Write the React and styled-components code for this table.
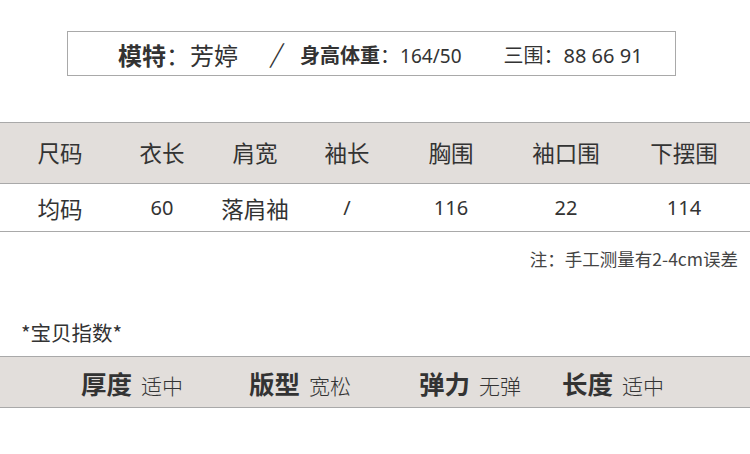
import React from "react";
import styled, { createGlobalStyle } from "styled-components";

const Global = createGlobalStyle`
  html, body { margin: 0; padding: 0; background: #fff; }
  body { font-family: "Noto Sans CJK SC", "Noto Sans", sans-serif; color: #333; }
`;

const Page = styled.div`
  width: 750px;
  height: 454px;
  overflow: hidden;
  padding-top: 31px;
  box-sizing: border-box;
`;

const ModelBox = styled.div`
  margin-left: 67px;
  width: 609px;
  height: 45px;
  border: 1px solid #a9a9a9;
  box-sizing: border-box;
  display: flex;
  align-items: center;
  padding-left: 50px;
  padding-top: 2px;
  color: #333;
`;

const ModelName = styled.span`
  font-size: 24px;
  & b { font-weight: 700; }
`;

const Slash = styled.span`
  font-family: "DejaVu Sans", sans-serif;
  font-size: 30px;
  font-weight: 200;
  line-height: 1;
  display: inline-block;
  transform: skewX(-14deg);
  margin: 0 18px 0 34px;
`;

const Stat = styled.span`
  font-size: 20px;
  margin-right: ${(p) => p.$gap || 0}px;
  & b { font-weight: 700; }
`;

const Num = styled.span`
  font-family: "Noto Sans", sans-serif;
  font-size: ${(p) => p.$size || 19}px;
`;

const Table = styled.div`
  margin-top: 46px;
  width: 750px;
`;

const Row = styled.div`
  display: grid;
  grid-template-columns: 120px 84px 102px 82px 126px 104px 1fr;
  align-items: center;
  height: ${(p) => p.$h}px;
  padding-bottom: ${(p) => (p.$head ? 2 : 0)}px;
  background: ${(p) => (p.$head ? "#e2dedb" : "#fff")};
  border-top: ${(p) => (p.$head ? "1px solid #a9a9a9" : "none")};
  border-bottom: 1px solid #a9a9a9;
  box-sizing: border-box;
`;

const Cell = styled.div`
  text-align: center;
  font-size: ${(p) => (p.$num ? 20 : 22.5)}px;
  font-family: ${(p) => (p.$num ? '"Noto Sans", sans-serif' : "inherit")};
  color: #333;
`;

const Note = styled.div`
  text-align: right;
  padding-right: 12px;
  margin-top: 14px;
  font-size: 17.5px;
  color: #444;
`;

const SectionTitle = styled.div`
  margin-top: 46px;
  padding-left: 21px;
  font-size: 20.5px;
  color: #333;
`;

const Band = styled.div`
  margin-top: 9px;
  height: 52px;
  box-sizing: border-box;
  background: #e2dedb;
  border-top: 1px solid #a9a9a9;
  border-bottom: 1px solid #a9a9a9;
  display: grid;
  grid-template-columns: 168px 170px 143px auto;
  align-items: center;
  padding-left: 81px;
`;

const Attr = styled.div`
  display: flex;
  align-items: baseline;
  gap: 9px;
`;

const AttrName = styled.span`
  font-size: 25.5px;
  font-weight: 700;
  color: #333;
`;

const AttrValue = styled.span`
  font-size: 21px;
  font-weight: 300;
  color: #333;
`;

const heads = ["尺码", "衣长", "肩宽", "袖长", "胸围", "袖口围", "下摆围"];
const vals = ["均码", "60", "落肩袖", "/", "116", "22", "114"];
const attrs = [
  ["厚度", "适中"],
  ["版型", "宽松"],
  ["弹力", "无弹"],
  ["长度", "适中"],
];

export default function App() {
  return (
    <Page>
      <Global />
      <ModelBox>
        <ModelName>
          <b>模特</b>：芳婷
        </ModelName>
        <Slash>/</Slash>
        <Stat $gap={42}>
          <b>身高体重</b>：<Num>164/50</Num>
        </Stat>
        <Stat>
          三围：<Num $size={20}>88 66 91</Num>
        </Stat>
      </ModelBox>
      <Table>
        <Row $head $h={62}>
          {heads.map((h) => (
            <Cell key={h}>{h}</Cell>
          ))}
        </Row>
        <Row $h={48}>
          {vals.map((v, i) => (
            <Cell key={i} $num={/^[0-9/]+$/.test(v)}>
              {v}
            </Cell>
          ))}
        </Row>
      </Table>
      <Note>注：手工测量有2-4cm误差</Note>
      <SectionTitle>*宝贝指数*</SectionTitle>
      <Band>
        {attrs.map(([n, v]) => (
          <Attr key={n}>
            <AttrName>{n}</AttrName>
            <AttrValue>{v}</AttrValue>
          </Attr>
        ))}
      </Band>
    </Page>
  );
}
